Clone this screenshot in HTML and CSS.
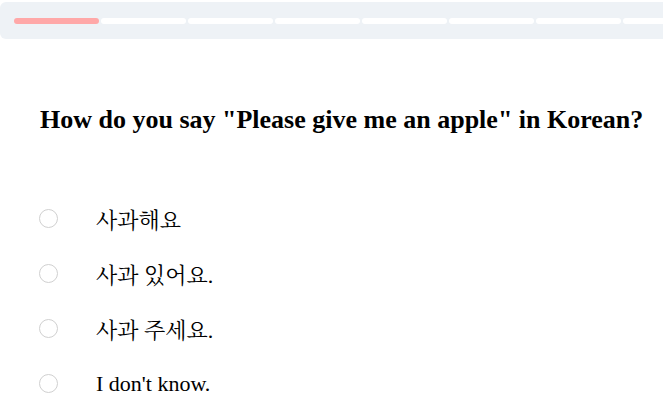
FILE: index.html
```html
<!DOCTYPE html>
<html lang="en">
<head>
    <meta charset="UTF-8">
    <meta name="viewport" content="width=device-width, initial-scale=1.0">
    <title>Korean Quiz</title>
    <link rel="stylesheet" href="styles.css">
</head>
<body>
    <div class="progress">
        <div class="step done"></div>
        <div class="step"></div>
        <div class="step"></div>
        <div class="step"></div>
        <div class="step"></div>
        <div class="step"></div>
        <div class="step"></div>
        <div class="step"></div>
        <div class="step"></div>
        <div class="step"></div>
    </div>

    <div class="quiz">
        <h2 class="question">How do you say "Please give me an apple" in Korean?</h2>

        <div class="options">
            <label class="option"><span class="radio"></span><span class="answer">사과해요</span></label>
            <label class="option"><span class="radio"></span><span class="answer">사과 있어요.</span></label>
            <label class="option"><span class="radio"></span><span class="answer">사과 주세요.</span></label>
            <label class="option"><span class="radio"></span><span class="answer">I don't know.</span></label>
        </div>
    </div>
</body>
</html>
```

FILE: styles.css
```css
body { margin: 0; overflow: hidden; font-family: "Liberation Serif", "Noto Serif CJK KR", "Noto Sans CJK KR", serif; color: #000; background: #fff; }
.progress { display: flex; align-items: center; gap: 2px; width: 900px; height: 37px; margin-top: 2px; padding-left: 14px; background: #eef2f6; border-radius: 6px 0 0 6px; }
.step { flex: none; width: 85px; height: 6px; background: #fff; border-radius: 3px; }
.step.done { background: #ffa8a8; }
.quiz { padding: 0 40px; }
.question { margin: 66px 0 0; font-size: 26px; font-weight: bold; white-space: nowrap; }
.options { display: flex; flex-direction: column; margin-top: 56px; }
.option { display: flex; align-items: center; height: 55px; }
.radio { flex: none; width: 17px; height: 17px; margin-left: -1px; border: 1px solid #d0d0d0; border-radius: 50%; }
.answer { margin-left: 38px; font-size: 22px; }
```
